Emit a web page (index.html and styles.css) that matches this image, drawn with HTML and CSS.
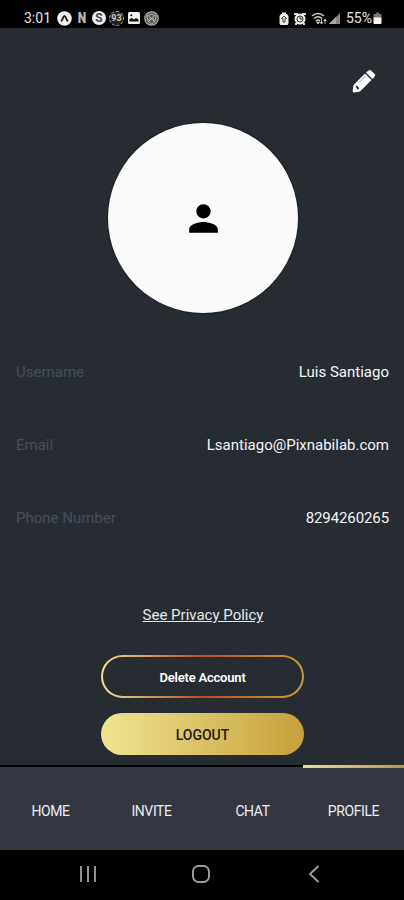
FILE: index.html
```html
<!DOCTYPE html>
<html lang="en">
<head>
  <meta charset="UTF-8">
  <title>Profile</title>
  <link rel="stylesheet" href="styles.css">
</head>
<body>
  <div class="phone">
    <!-- status bar -->
    <div class="status-bar">
      <span class="clock">3:01</span>
      <div class="notifications">
        <svg width="15" height="15" viewBox="0 0 15 15">
          <circle cx="7.5" cy="7.5" r="7.3" fill="#f2f2f2"/>
          <path d="M4 10.3C5.8 8.8 6 5 7.5 5S9.2 8.8 11 10.3" fill="none" stroke="#222" stroke-width="1.9"/>
        </svg>
        <span class="letter-icon">N</span>
        <span class="round-icon">S</span>
        <span class="round-icon dark">93</span>
        <svg width="14" height="14" viewBox="0 0 14 14">
          <rect x="1" y="1" width="12" height="12" rx="1.5" fill="#eee"/>
          <path d="M2.5 10.5V8L5 7l2 1.5L9 7l2.5 1.5v2z" fill="#111"/>
          <circle cx="4.3" cy="4.3" r="1" fill="#111"/>
        </svg>
        <svg width="15" height="15" viewBox="0 0 15 15">
          <circle cx="7.5" cy="7.5" r="6.7" fill="#555" stroke="#aaa" stroke-width="1.3"/>
          <path d="M3 5l4.5-2L12 5l-1 5-3.5 3L4 10zM4 4l7 7M11 4l-7 7M5 8h5" fill="none" stroke="#bbb" stroke-width="1"/>
        </svg>
      </div>
      <div class="indicators">
        <svg width="10" height="13" viewBox="0 0 10 13">
          <path d="M3 2V.5h4V2h1l1.500 2v7.500L8.500 13h-7L.5 11.500V4L2 2z" fill="#eee"/>
          <path d="M5 4L2.500 6.500H4V10h2V6.500h1.500z" fill="none" stroke="#444"/>
        </svg>
        <svg width="12" height="13" viewBox="0 0 12 13">
          <path d="M0 1h4v2H0zM8 1h4v2H8zM1 11h2v2H1zM9 11h2v2H9z" fill="#ddd"/>
          <circle cx="6" cy="7" r="5.500" fill="#eee"/>
          <circle cx="6" cy="7" r="3" fill="none" stroke="#222"/>
          <path d="M6 5v2h2" fill="none" stroke="#222"/>
        </svg>
        <svg class="wifi" width="16" height="13" viewBox="0 0 16 13">
          <path d="M1 4q6-5 12 0M3 6.500q4-3.500 8 0M5 9q2-2 4 0" fill="none" stroke="#ccc" stroke-width="1.600"/>
          <path d="M7 12L5.500 10h3zM10.500 7v4M9 10l1.500 2 1.500-2M14 12V8M12.700 9L14 7l1.300 2" fill="#ccc" stroke="#ccc" stroke-width=".8"/>
        </svg>
        <svg class="signal" width="11" height="11" viewBox="0 0 11 11">
          <path d="M0 11L11 0v11z" fill="#888"/>
          <path d="M0 11l7-7v7z" fill="#aaa"/>
        </svg>
        <span class="percent">55%</span>
        <svg class="battery" width="9" height="12" viewBox="0 0 8 12">
          <path d="M2.500 .5h3V2H8v4H0V2h2.500z" fill="#777"/>
          <path d="M0 5.500h8V11q0 1-1 1H1q-1 0-1-1z" fill="#f5f5f5"/>
        </svg>
      </div>
    </div>

    <!-- profile -->
    <div class="profile">
      <div class="edit">
        <svg width="24" height="24" viewBox="0 0 24 24">
          <path d="M1.500 16L13 4.500l6.500 6.500L8 22.500L2 23.500Q.5 23.500.700 22zM14 3.500L16.300 1.700q1.500-1.300 3 0L22.500 4.700q1.300 1.500 0 3l-2 2.300z" fill="#fff"/>
          <path d="M4.300 17.200l2.200 2.800" stroke="#272c33" stroke-width="2"/>
          <path d="M7 13.500L13.500 7" stroke="#8b8e92" stroke-width="1"/>
        </svg>
      </div>

      <div class="avatar">
        <svg width="43" height="43" viewBox="0 0 24 24">
          <path d="M12 12c2.210 0 4-1.790 4-4s-1.790-4-4-4-4 1.790-4 4 1.790 4 4 4zm0 2c-2.670 0-8 1.340-8 4v2h16v-2c0-2.660-5.330-4-8-4z"/>
        </svg>
      </div>

      <div class="details">
        <div class="row">
          <span class="label">Username</span>
          <span class="value">Luis Santiago</span>
        </div>
        <div class="row">
          <span class="label">Email</span>
          <span class="value">Lsantiago@Pixnabilab.com</span>
        </div>
        <div class="row">
          <span class="label">Phone Number</span>
          <span class="value phone-number">8294260265</span>
        </div>
      </div>

      <a class="privacy">See Privacy Policy</a>
      <button class="btn delete">Delete Account</button>
      <button class="btn logout">LOGOUT</button>
    </div>

    <!-- tabs -->
    <div class="tabs">
      <div class="tab">HOME</div>
      <div class="tab">INVITE</div>
      <div class="tab">CHAT</div>
      <div class="tab active">PROFILE</div>
    </div>

    <!-- android navigation -->
    <div class="nav-bar">
      <svg width="18" height="18" viewBox="0 0 18 18">
        <path d="M2 1v16M9 1v16M16 1v16" stroke="#a0a0a0" stroke-width="1.800"/>
      </svg>
      <svg width="20" height="20" viewBox="0 0 20 20">
        <rect x="2" y="2" width="16" height="16" rx="5.500" fill="none" stroke="#a0a0a0" stroke-width="1.900"/>
      </svg>
      <svg class="back" width="12" height="18" viewBox="0 0 12 18">
        <path d="M10.500 1L2 9l8.500 8" fill="none" stroke="#a0a0a0" stroke-width="1.800"/>
      </svg>
    </div>
  </div>
</body>
</html>
```

FILE: styles.css
```css
body {
  margin: 0;
  background: #000;
  font-family: Roboto, sans-serif;
}

svg {
  display: block;
}

.phone {
  width: 404px;
  height: 900px;
  display: flex;
  flex-direction: column;
  overflow: hidden;
}

.status-bar {
  height: 28px;
  box-sizing: border-box;
  padding: 8px 22px 0 24px;
  display: flex;
  align-items: center;
  background: #000;
  color: #e6e6e6;
}

.clock {
  width: 33px;
  font-size: 14px;
}

.notifications {
  display: flex;
  align-items: center;
  gap: 3px;
}

.letter-icon {
  width: 14px;
  text-align: center;
  font-size: 15px;
  line-height: 15px;
  font-weight: 900;
  color: #bbb;
  transform: scaleX(0.8);
}

.round-icon {
  width: 14px;
  height: 14px;
  border-radius: 50%;
  background: #eee;
  color: #444;
  font-size: 12px;
  line-height: 14px;
  font-weight: bold;
  text-align: center;
}

.round-icon.dark {
  box-sizing: border-box;
  width: 15px;
  height: 15px;
  border: 1px dashed #aaa;
  background: #222;
  color: #ccc;
  font-size: 9px;
  line-height: 13px;
}

.indicators {
  margin-left: auto;
  display: flex;
  align-items: center;
}

.indicators svg {
  margin-right: 5px;
}

.indicators .wifi {
  margin-right: 2px;
}

.indicators .signal {
  margin-right: 6px;
}

.indicators .battery {
  margin: 0 0 0 1px;
}

.percent {
  font-size: 14px;
}

.profile {
  flex: 1;
  display: flex;
  flex-direction: column;
  align-items: center;
  background: #272c33;
}

.edit {
  align-self: flex-end;
  margin: 41px 28px 0 0;
}

.avatar {
  width: 190px;
  height: 190px;
  margin: 30px 0 0 2px;
  border-radius: 50%;
  background: #fafafa;
  box-shadow: 0 0 1px 1px #1b1f24;
  display: flex;
  align-items: center;
  justify-content: center;
}

.details {
  align-self: stretch;
  padding: 22px 15px 0 16px;
}

.row {
  height: 73px;
  display: flex;
  align-items: center;
  justify-content: space-between;
  font-size: 15px;
}

.label {
  color: #464d5d;
}

.value {
  color: #f5f5f5;
}

.phone-number {
  letter-spacing: -0.1px;
}

.privacy {
  margin: 51px 0 0 2px;
  font-size: 15px;
  line-height: 20px;
  color: #e8e8e8;
  text-decoration: underline;
}

.btn {
  box-sizing: border-box;
  width: 203px;
  height: 43px;
  margin: 30px 0 0 1px;
  padding: 2px 0 0;
  border-radius: 22px;
  font-family: inherit;
}

.delete {
  border: 2px solid transparent;
  background:
    linear-gradient(#272c33, #272c33) padding-box,
    linear-gradient(to right, #eee293, #b84b24 50%, #c7a03c) border-box;
  color: #fff;
  font-size: 13px;
  font-weight: 600;
  letter-spacing: -0.2px;
}

.logout {
  height: 42px;
  margin-top: 15px;
  border: none;
  background: linear-gradient(to right, #efe491, #c6a03b);
  color: #1d1b14;
  font-size: 14px;
  font-weight: 500;
}

.tabs {
  height: 85px;
  display: flex;
  background: #343741;
}

.tab {
  flex: 1;
  box-sizing: border-box;
  padding-top: 4px;
  border-top: 2px solid #050608;
  display: flex;
  align-items: center;
  justify-content: center;
  color: #eceef2;
  font-size: 14px;
  letter-spacing: -0.4px;
}

.tab.active {
  border-top: 3px solid;
  border-image: linear-gradient(to right, #e9df98, #b99544) 1;
}

.nav-bar {
  height: 50px;
  box-sizing: border-box;
  padding: 0 0 2px 79px;
  display: flex;
  align-items: center;
  gap: 94px;
  background: #000;
}

.back {
  margin-left: 3px;
}
```
